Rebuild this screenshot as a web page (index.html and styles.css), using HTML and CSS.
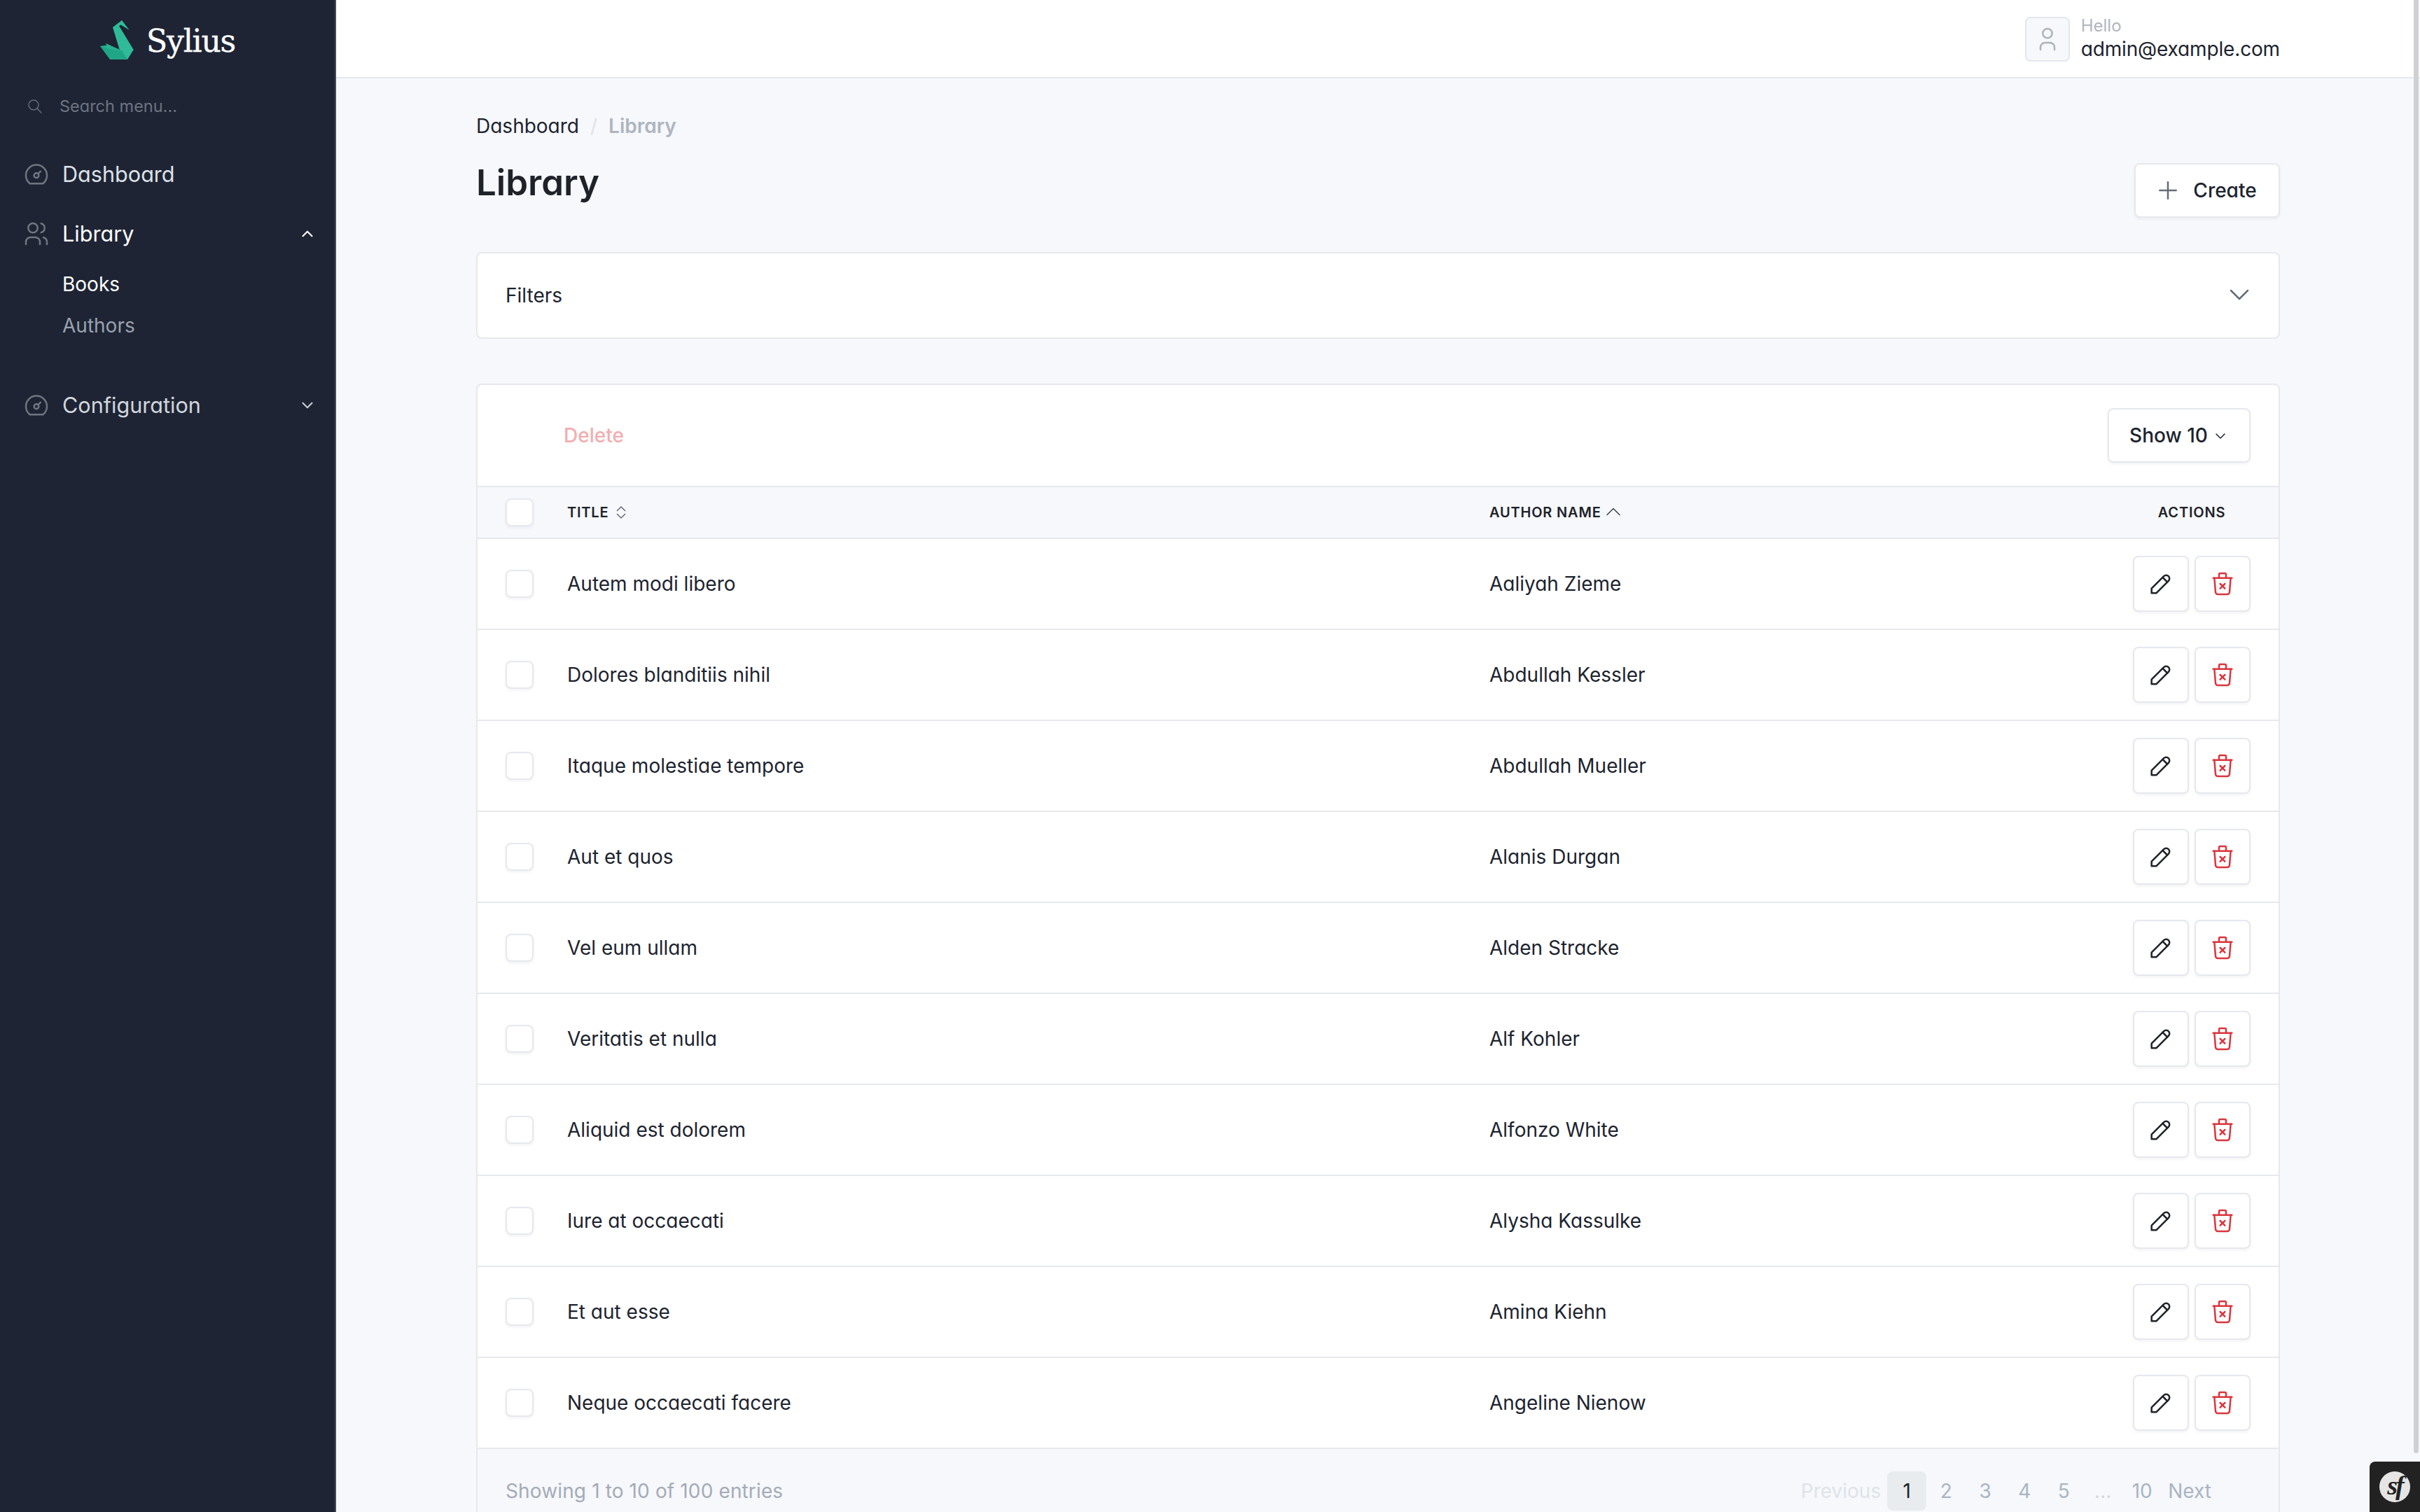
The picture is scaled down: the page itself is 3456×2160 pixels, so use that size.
FILE: index.html
```html
<!DOCTYPE html>
<html lang="en">
<head>
<meta charset="utf-8">
<title>Library</title>
<link rel="stylesheet" href="styles.css">
</head>
<body>
<svg class="defs" width="0" height="0" aria-hidden="true">
  <symbol id="i-dash" viewBox="0 0 24 24"><path d="M12 13m-2 0a2 2 0 1 0 4 0a2 2 0 1 0 -4 0"/><path d="M13.45 11.55l2.05 -2.05"/><path d="M6.4 20a9 9 0 1 1 11.2 0z"/></symbol>
  <symbol id="i-users" viewBox="0 0 24 24"><path d="M9 7m-4 0a4 4 0 1 0 8 0a4 4 0 1 0 -8 0"/><path d="M3 21v-2a4 4 0 0 1 4 -4h4a4 4 0 0 1 4 4v2"/><path d="M16 3.13a4 4 0 0 1 0 7.75"/><path d="M21 21v-2a4 4 0 0 0 -3 -3.85"/></symbol>
  <symbol id="i-user" viewBox="0 0 24 24"><path d="M8 7a4 4 0 1 0 8 0a4 4 0 0 0 -8 0"/><path d="M6 21v-2a4 4 0 0 1 4 -4h4a4 4 0 0 1 4 4v2"/></symbol>
  <symbol id="i-pencil" viewBox="0 0 24 24"><path d="M4 20h4l10.5 -10.5a2.828 2.828 0 1 0 -4 -4l-10.5 10.5v4"/><path d="M13.5 6.5l4 4"/></symbol>
  <symbol id="i-trash" viewBox="0 0 24 24"><path d="M4 7h16"/><path d="M5 7l1 12a2 2 0 0 0 2 2h8a2 2 0 0 0 2 -2l1 -12"/><path d="M9 7v-3a1 1 0 0 1 1 -1h4a1 1 0 0 1 1 1v3"/><path d="M10 12l4 4m0 -4l-4 4"/></symbol>
  <symbol id="i-down" viewBox="0 0 24 24"><path d="M6 9l6 6l6 -6"/></symbol>
  <symbol id="i-up" viewBox="0 0 24 24"><path d="M6 15l6 -6l6 6"/></symbol>
  <symbol id="i-plus" viewBox="0 0 24 24"><path d="M12 5v14"/><path d="M5 12h14"/></symbol>
  <symbol id="i-search" viewBox="0 0 24 24"><path d="M10 10m-7 0a7 7 0 1 0 14 0a7 7 0 1 0 -14 0"/><path d="M21 21l-6 -6"/></symbol>
</svg>

<div class="shell">
  <aside class="sidebar">
    <div class="brand">
      <svg class="brand-mark" viewBox="143 27 50 58" aria-hidden="true">
        <polygon class="swan-a" points="175,28 185.5,41.7 173.5,34.5 171,36 191.7,70 183,84 172,71 162,38"/>
        <polygon class="swan-b" points="144,65 153.5,64 152,61 175,71.6 183,84 158,84"/>
        <polygon class="swan-c" points="144,65 153.5,64 152,61 175,71.6 158,69"/>
      </svg>
      <span class="brand-name">Sylius</span>
    </div>
    <div class="side-search">
      <svg class="ico ico-search"><use href="#i-search"/></svg>
      <span>Search menu...</span>
    </div>
    <nav class="side-nav">
      <a class="nav-item nav-dash"><svg class="ico ico-nav"><use href="#i-dash"/></svg><span>Dashboard</span></a>
      <a class="nav-item nav-lib"><svg class="ico ico-nav"><use href="#i-users"/></svg><span>Library</span><svg class="ico ico-caret"><use href="#i-up"/></svg></a>
      <div class="subnav">
        <a class="sub-item sub-active">Books</a>
        <a class="sub-item">Authors</a>
      </div>
      <a class="nav-item nav-conf"><svg class="ico ico-nav"><use href="#i-dash"/></svg><span>Configuration</span><svg class="ico ico-caret"><use href="#i-down"/></svg></a>
    </nav>
  </aside>

  <div class="main">
    <header class="topbar">
      <div class="user">
        <span class="avatar"><svg class="ico ico-user"><use href="#i-user"/></svg></span>
        <div class="user-text">
          <div class="hello">Hello</div>
          <div class="email">admin@example.com</div>
        </div>
      </div>
    </header>

    <main class="content">
      <div class="crumbs"><a>Dashboard</a><span class="crumb-sep">/</span><span class="crumb-cur">Library</span></div>
      <div class="page-head">
        <h1>Library</h1>
        <button class="btn btn-create"><svg class="ico ico-plus"><use href="#i-plus"/></svg>Create</button>
      </div>

      <section class="card filters">
        <span>Filters</span>
        <svg class="ico ico-filter"><use href="#i-down"/></svg>
      </section>

      <section class="card list">
        <div class="toolbar">
          <span class="bulk-delete">Delete</span>
          <button class="btn btn-show">Show 10<svg class="ico ico-show"><use href="#i-down"/></svg></button>
        </div>
        <div class="row row-head">
          <span class="check"></span>
          <span class="th">TITLE<svg class="ico-sort" viewBox="0 0 16 20"><path d="M2 8L8 2L14 8"/><path d="M14 12L8 18L2 12"/></svg></span>
          <span class="th">AUTHOR NAME<svg class="ico ico-asc"><use href="#i-up"/></svg></span>
          <span class="th th-actions">ACTIONS</span>
        </div>
        <div class="row"><span class="check"></span><span>Autem modi libero</span><span>Aaliyah Zieme</span><span class="actions"><button class="btn btn-icon"><svg class="ico ico-act"><use href="#i-pencil"/></svg></button><button class="btn btn-icon danger"><svg class="ico ico-act"><use href="#i-trash"/></svg></button></span></div>
        <div class="row"><span class="check"></span><span>Dolores blanditiis nihil</span><span>Abdullah Kessler</span><span class="actions"><button class="btn btn-icon"><svg class="ico ico-act"><use href="#i-pencil"/></svg></button><button class="btn btn-icon danger"><svg class="ico ico-act"><use href="#i-trash"/></svg></button></span></div>
        <div class="row"><span class="check"></span><span>Itaque molestiae tempore</span><span>Abdullah Mueller</span><span class="actions"><button class="btn btn-icon"><svg class="ico ico-act"><use href="#i-pencil"/></svg></button><button class="btn btn-icon danger"><svg class="ico ico-act"><use href="#i-trash"/></svg></button></span></div>
        <div class="row"><span class="check"></span><span>Aut et quos</span><span>Alanis Durgan</span><span class="actions"><button class="btn btn-icon"><svg class="ico ico-act"><use href="#i-pencil"/></svg></button><button class="btn btn-icon danger"><svg class="ico ico-act"><use href="#i-trash"/></svg></button></span></div>
        <div class="row"><span class="check"></span><span>Vel eum ullam</span><span>Alden Stracke</span><span class="actions"><button class="btn btn-icon"><svg class="ico ico-act"><use href="#i-pencil"/></svg></button><button class="btn btn-icon danger"><svg class="ico ico-act"><use href="#i-trash"/></svg></button></span></div>
        <div class="row"><span class="check"></span><span>Veritatis et nulla</span><span>Alf Kohler</span><span class="actions"><button class="btn btn-icon"><svg class="ico ico-act"><use href="#i-pencil"/></svg></button><button class="btn btn-icon danger"><svg class="ico ico-act"><use href="#i-trash"/></svg></button></span></div>
        <div class="row"><span class="check"></span><span>Aliquid est dolorem</span><span>Alfonzo White</span><span class="actions"><button class="btn btn-icon"><svg class="ico ico-act"><use href="#i-pencil"/></svg></button><button class="btn btn-icon danger"><svg class="ico ico-act"><use href="#i-trash"/></svg></button></span></div>
        <div class="row"><span class="check"></span><span>Iure at occaecati</span><span>Alysha Kassulke</span><span class="actions"><button class="btn btn-icon"><svg class="ico ico-act"><use href="#i-pencil"/></svg></button><button class="btn btn-icon danger"><svg class="ico ico-act"><use href="#i-trash"/></svg></button></span></div>
        <div class="row"><span class="check"></span><span>Et aut esse</span><span>Amina Kiehn</span><span class="actions"><button class="btn btn-icon"><svg class="ico ico-act"><use href="#i-pencil"/></svg></button><button class="btn btn-icon danger"><svg class="ico ico-act"><use href="#i-trash"/></svg></button></span></div>
        <div class="row"><span class="check"></span><span>Neque occaecati facere</span><span>Angeline Nienow</span><span class="actions"><button class="btn btn-icon"><svg class="ico ico-act"><use href="#i-pencil"/></svg></button><button class="btn btn-icon danger"><svg class="ico ico-act"><use href="#i-trash"/></svg></button></span></div>
        <div class="list-foot">
          <span class="entries">Showing 1 to 10 of 100 entries</span>
          <div class="pager">
            <span class="pg-edge pg-off">Previous</span>
            <span class="pg pg-cur">1</span>
            <span class="pg">2</span>
            <span class="pg">3</span>
            <span class="pg">4</span>
            <span class="pg">5</span>
            <span class="pg pg-dots">...</span>
            <span class="pg">10</span>
            <span class="pg-edge">Next</span>
          </div>
        </div>
      </section>
    </main>
  </div>
</div>

<div class="scroll-thumb"></div>
<div class="sf-toolbar"><span class="sf-logo">sf</span></div>
</body>
</html>
```

FILE: styles.css
```css
* { box-sizing: border-box; }
html, body { margin: 0; height: 2160px; overflow: hidden; }
body {
  font-family: Inter, "Liberation Sans", sans-serif;
  font-feature-settings: "cv03", "cv04", "cv11";
  font-size: 28px;
  line-height: 40px;
  color: #1d232e;
  background: #f6f8fc;
}
.defs { position: absolute; }
.ico { fill: none; stroke: currentColor; stroke-width: 1.5; stroke-linecap: round; stroke-linejoin: round; flex: none; display: block; }

.shell { display: flex; height: 2160px; }

/* sidebar */
.sidebar {
  flex: 0 0 480px;
  background: #1e2434;
  border-right: 2px solid #434a59;
  padding-top: 28px;
}
.brand { display: flex; align-items: center; justify-content: center; height: 58px; gap: 17px; }
.brand-mark { width: 50px; height: 58px; display: block; }
.swan-a { fill: #2fbb9a; }
.swan-b { fill: #1fa687; }
.swan-c { fill: #27b291; }
.brand-name { font-family: "DejaVu Serif", serif; font-size: 44px; line-height: 58px; color: #fff; letter-spacing: -1.2px; font-feature-settings: normal; -webkit-text-stroke: .4px #fff; margin-top: 3px; }
.side-search { display: flex; align-items: center; gap: 23px; height: 40px; margin: 45px 0 0 38px; font-size: 23.5px; color: #6e7481; padding-top: 1px; }
.ico-search { width: 24px; height: 24px; color: #666c79; }
.side-nav { margin-top: 58px; }
.nav-item { display: flex; align-items: center; height: 40px; padding: 0 26px 0 32px; color: #dce1e8; font-size: 30.6px; }
.nav-item span { margin-left: 17px; flex: 1; }
.nav-lib { margin-top: 45px; color: #fff; }
.nav-conf { margin-top: 74px; color: #d2d6dc; }
.ico-nav { width: 40px; height: 40px; color: #70757f; }
.ico-caret { width: 26px; height: 26px; stroke-width: 2; color: #c8ccd2; }
.nav-lib .ico-caret { color: #fff; }
.subnav { display: flex; flex-direction: column; padding: 32px 0 0 89px; gap: 19px; }
.sub-item { color: #9aa2ae; font-size: 28px; line-height: 40px; }
.sub-active { color: #fff; }

/* main */
.main { flex: 1; min-width: 0; display: flex; flex-direction: column; }
.topbar { height: 112px; flex: none; background: #fff; border-bottom: 2px solid #e6e8ee; display: flex; justify-content: flex-end; padding-right: 200px; }
.user { display: flex; align-items: flex-start; gap: 16px; padding-top: 24px; }
.avatar { width: 64px; height: 64px; background: #f6f8fb; border: 2px solid #e3e6ec; border-radius: 8px; display: flex; align-items: center; justify-content: center; }
.ico-user { width: 40px; height: 40px; color: #adb3bc; }
.user-text { margin-top: -5px; }
.hello { font-size: 24px; line-height: 36px; color: #b0b6bf; }
.email { font-size: 28px; line-height: 32px; letter-spacing: -.15px; margin-top: -1px; }

.content { padding: 48px 200px 0; }
.crumbs { display: flex; height: 40px; align-items: center; }
.crumb-sep { color: #dfe2e7; margin: 0 16px; }
.crumb-cur { color: #aeb5bf; font-weight: 600; }
.page-head { display: flex; justify-content: space-between; align-items: flex-start; margin-top: 33px; height: 77px; margin-bottom: 50px; }
h1 { margin: 0; font-size: 51px; line-height: 55px; font-weight: 600; color: #1f2329; }

.btn { font: inherit; font-weight: 500; font-feature-settings: inherit; color: inherit; background: #fff; border: 2px solid #e6e8ee; border-radius: 8px; box-shadow: 0 2px 4px rgba(30,36,52,.06); display: inline-flex; align-items: center; justify-content: center; padding: 0; }
.btn-create { width: 208px; height: 78px; gap: 16px; padding-right: 5px; }
.ico-plus { width: 40px; height: 40px; color: #666c76; }

.card { background: #fff; border: 2px solid #e6e8ee; border-radius: 8px; }
.filters { height: 124px; display: flex; align-items: center; justify-content: space-between; padding: 0 32px 0 40px; margin-bottom: 64px; }
.ico-filter { width: 48px; height: 48px; stroke-width: 1.25; color: #666c76; margin-top: -2px; }

.list { overflow: hidden; height: 1700px; }
.toolbar { height: 146px; display: flex; align-items: center; justify-content: space-between; padding: 0 40px 0 123px; border-bottom: 2px solid #e6e8ee; }
.bulk-delete { color: #f1aeb1; font-weight: 500; }
.btn-show { width: 204px; height: 78px; gap: 6px; }
.ico-show { width: 24px; height: 24px; margin-top: 2px; }

.row { display: grid; grid-template-columns: 88px 1317px 1fr 168px; align-items: center; height: 130px; padding: 0 40px; border-bottom: 2px solid #e6e8ee; }
.row-head { height: 74px; background: #f6f8fc; }
.check { display: block; width: 40px; height: 40px; background: #fff; border: 2px solid #e6e8ee; border-radius: 8px; box-shadow: 0 2px 4px rgba(30,36,52,.06); }
.th { display: flex; align-items: center; font-size: 20px; font-weight: 600; letter-spacing: .8px; line-height: 24px; color: #1f2329; }
.th-actions { justify-content: center; }
.ico-sort { width: 16px; height: 20px; margin-left: 10px; fill: none; stroke: #666c76; stroke-width: 1.5; display: block; }
.ico-asc { width: 36px; height: 36px; stroke-width: 1; margin-left: -1px; color: #3a3f48; margin-top: -2px; }
.actions { display: flex; justify-content: space-between; }
.btn-icon { width: 80px; height: 80px; }
.ico-act { width: 40px; height: 40px; color: #1f2329; }
.danger .ico-act { color: #d9363e; }

.list-foot { height: 130px; background: #f6f8fc; display: flex; justify-content: space-between; align-items: flex-start; padding: 32px 87px 0 40px; }
.entries { color: #a4abb7; line-height: 56px; letter-spacing: .13px; }
.pager { display: flex; align-items: center; color: #a9b5c3; }
.pg { width: 56px; height: 56px; border-radius: 8px; display: flex; align-items: center; justify-content: center; }
.pg-cur { background: #e8ecef; color: #1f2329; }
.pg-dots { color: #d3d8de; }
.pg-edge { margin: 0 9px; }
.pg-off { color: #dfe3e8; }

/* overlays */
.scroll-thumb { position: fixed; top: -8px; right: 2px; width: 7px; height: 2084px; background: #cfd0d4; border-radius: 4px; }
.sf-toolbar { position: fixed; right: 0; bottom: 0; width: 72px; height: 72px; background: #222; border-top-left-radius: 8px; display: flex; align-items: center; justify-content: center; }
.sf-logo { width: 44px; height: 44px; border-radius: 50%; background: #e5e5e5; color: #222; font-family: "Liberation Serif", serif; font-style: italic; font-weight: 700; font-size: 38px; line-height: 40px; text-align: center; letter-spacing: -3px; font-feature-settings: normal; }
```
